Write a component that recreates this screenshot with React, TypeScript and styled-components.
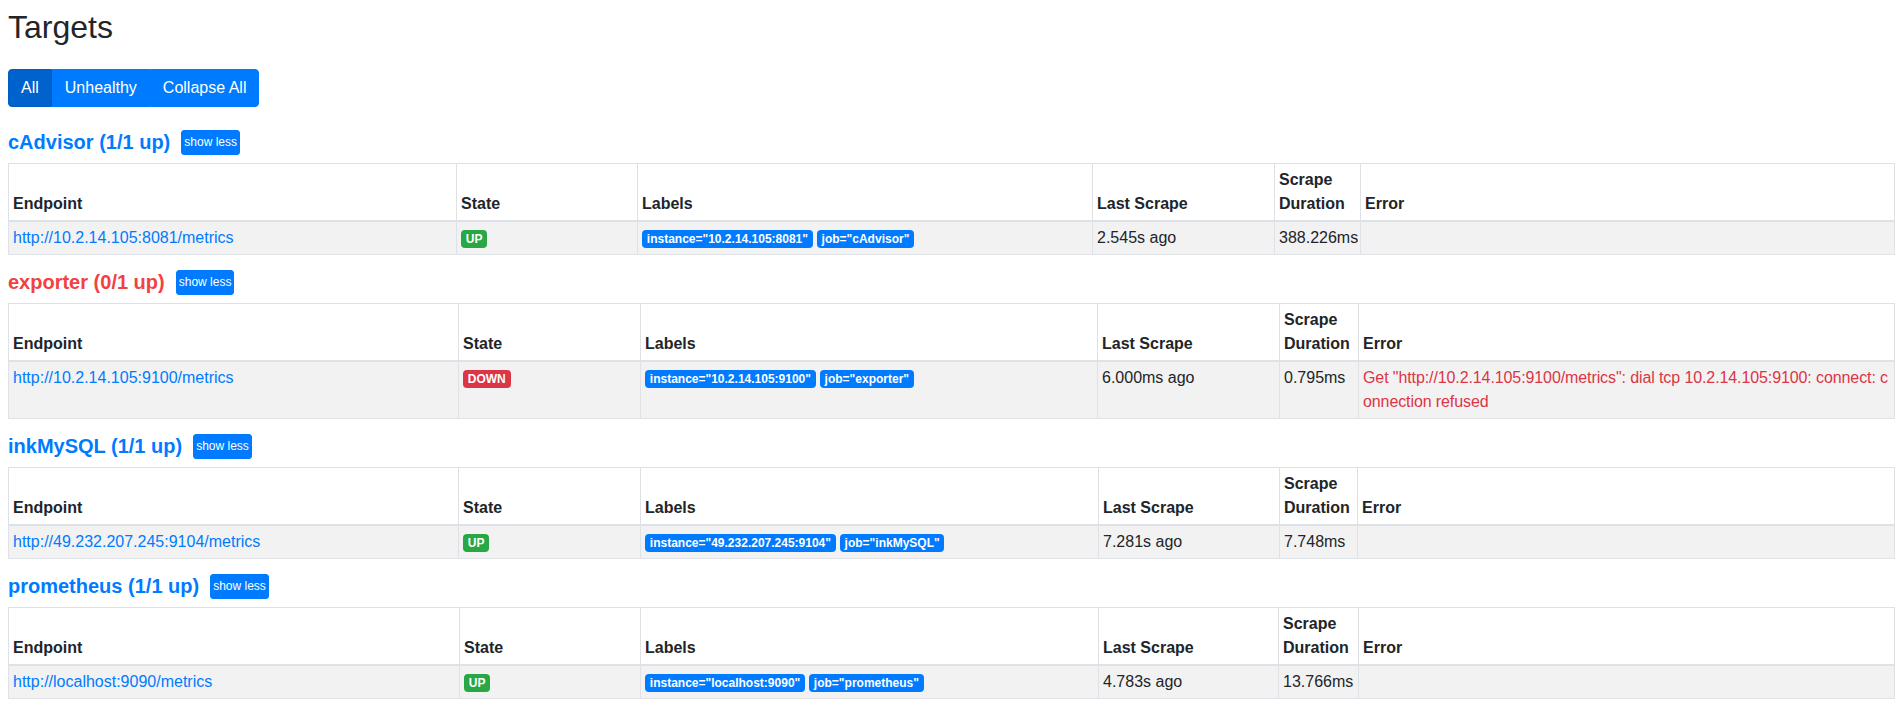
import React from "react";
import styled, { createGlobalStyle } from "styled-components";

const GlobalStyle = createGlobalStyle`
  html, body { margin: 0; padding: 0; background: #fff; }
  body {
    font-family: "Liberation Sans", Arial, sans-serif;
    font-size: 16px;
    line-height: 1.5;
    color: #212529;
  }
  * { box-sizing: border-box; }
`;

const Page = styled.div`
  display: flex;
  flex-direction: column;
  padding: 0 8px;
`;

const Title = styled.h2`
  margin: 8px 0 23px;
  font-size: 32px;
  font-weight: 500;
  line-height: 1.2;
  color: #212529;
`;

const ButtonGroup = styled.div`
  display: inline-flex;
  align-self: flex-start;
  margin-bottom: 8px;
`;

const FilterButton = styled.button<{ $active?: boolean }>`
  font-family: inherit;
  font-size: 16px;
  line-height: 24px;
  padding: 6px 12px;
  color: #fff;
  background: ${(p) => (p.$active ? "#0062cc" : "#007bff")};
  border: 1px solid ${(p) => (p.$active ? "#005cbf" : "#007bff")};
  border-radius: 0;
  cursor: pointer;
  &:first-child { border-radius: 4px 0 0 4px; }
  &:last-child { border-radius: 0 4px 4px 0; }
`;

const PoolHeading = styled.h3`
  display: flex;
  align-items: center;
  height: 25px;
  margin: 15px 0 8px;
  font-size: 20px;
  font-weight: 700;
  line-height: 25px;
`;

const PoolLink = styled.a<{ $danger?: boolean }>`
  color: ${(p) => (p.$danger ? "rgb(242, 65, 65)" : "#007bff")};
  text-decoration: none;
`;

const ShowLess = styled.button`
  margin-left: 11px;
  font-family: inherit;
  font-size: 12px;
  font-weight: 400;
  line-height: 17px;
  padding: 3px 2px;
  color: #fff;
  background: #007bff;
  border: 1px solid #007bff;
  border-radius: 3px;
  cursor: pointer;
`;

const Table = styled.table`
  width: 100%;
  table-layout: fixed;
  border-collapse: collapse;
  border: 1px solid #dee2e6;
  font-size: 16px;
`;

const HeadCell = styled.th`
  padding: 4px;
  line-height: 24px;
  text-align: left;
  vertical-align: bottom;
  font-weight: 700;
  border: 1px solid #dee2e6;
  border-bottom-width: 2px;
`;

const BodyRow = styled.tr`
  background: #f2f2f2;
`;

const Cell = styled.td<{ $error?: boolean }>`
  padding: 4px;
  line-height: 24px;
  vertical-align: top;
  border: 1px solid #dee2e6;
  white-space: ${(p) => (p.$error ? "normal" : "nowrap")};
  word-break: ${(p) => (p.$error ? "break-all" : "normal")};
  color: ${(p) => (p.$error ? "#dc3545" : "#212529")};
  letter-spacing: ${(p) => (p.$error ? "-0.1px" : "normal")};
`;

const EndpointLink = styled.a`
  color: #007bff;
  text-decoration: none;
`;

const Badge = styled.span<{ $tone: "success" | "danger" | "primary" }>`
  display: inline-block;
  margin-right: 4px;
  padding: 3px 4.8px;
  font-size: 12px;
  font-weight: 700;
  line-height: 1;
  color: #fff;
  white-space: nowrap;
  vertical-align: baseline;
  border-radius: 4px;
  background: ${(p) =>
    p.$tone === "success" ? "#28a745" : p.$tone === "danger" ? "#dc3545" : "#007bff"};
`;

type Target = {
  endpoint: string;
  state: "UP" | "DOWN";
  labels: [string, string][];
  last: string;
  duration: string;
  error: string;
};

type Pool = {
  name: string;
  up: number;
  total: number;
  cols: number[];
  targets: Target[];
};

const pools: Pool[] = [
  {
    name: "cAdvisor",
    up: 1,
    total: 1,
    cols: [448, 181, 455, 182, 86],
    targets: [
      {
        endpoint: "http://10.2.14.105:8081/metrics",
        state: "UP",
        labels: [
          ["instance", "10.2.14.105:8081"],
          ["job", "cAdvisor"],
        ],
        last: "2.545s ago",
        duration: "388.226ms",
        error: "",
      },
    ],
  },
  {
    name: "exporter",
    up: 0,
    total: 1,
    cols: [450, 182, 457, 182, 79],
    targets: [
      {
        endpoint: "http://10.2.14.105:9100/metrics",
        state: "DOWN",
        labels: [
          ["instance", "10.2.14.105:9100"],
          ["job", "exporter"],
        ],
        last: "6.000ms ago",
        duration: "0.795ms",
        error:
          'Get "http://10.2.14.105:9100/metrics": dial tcp 10.2.14.105:9100: connect: connection refused',
      },
    ],
  },
  {
    name: "inkMySQL",
    up: 1,
    total: 1,
    cols: [450, 182, 458, 181, 78],
    targets: [
      {
        endpoint: "http://49.232.207.245:9104/metrics",
        state: "UP",
        labels: [
          ["instance", "49.232.207.245:9104"],
          ["job", "inkMySQL"],
        ],
        last: "7.281s ago",
        duration: "7.748ms",
        error: "",
      },
    ],
  },
  {
    name: "prometheus",
    up: 1,
    total: 1,
    cols: [451, 181, 458, 180, 80],
    targets: [
      {
        endpoint: "http://localhost:9090/metrics",
        state: "UP",
        labels: [
          ["instance", "localhost:9090"],
          ["job", "prometheus"],
        ],
        last: "4.783s ago",
        duration: "13.766ms",
        error: "",
      },
    ],
  },
];

const headers = ["Endpoint", "State", "Labels", "Last Scrape", "Scrape Duration", "Error"];

function PoolPanel({ pool }: { pool: Pool }) {
  return (
    <>
      <PoolHeading>
        <PoolLink href={`#pool-${pool.name}`} $danger={pool.up < pool.total}>
          {pool.name} ({pool.up}/{pool.total} up)
        </PoolLink>
        <ShowLess type="button">show less</ShowLess>
      </PoolHeading>
      <Table>
        <colgroup>
          {pool.cols.map((w, i) => (
            <col key={i} style={{ width: w }} />
          ))}
          <col />
        </colgroup>
        <thead>
          <tr>
            {headers.map((h) => (
              <HeadCell key={h}>{h}</HeadCell>
            ))}
          </tr>
        </thead>
        <tbody>
          {pool.targets.map((t) => (
            <BodyRow key={t.endpoint}>
              <Cell>
                <EndpointLink href={t.endpoint}>{t.endpoint}</EndpointLink>
              </Cell>
              <Cell>
                <Badge $tone={t.state === "UP" ? "success" : "danger"}>{t.state}</Badge>
              </Cell>
              <Cell>
                {t.labels.map(([k, v]) => (
                  <Badge key={k} $tone="primary">
                    {k}="{v}"
                  </Badge>
                ))}
              </Cell>
              <Cell>{t.last}</Cell>
              <Cell>{t.duration}</Cell>
              <Cell $error={!!t.error}>{t.error}</Cell>
            </BodyRow>
          ))}
        </tbody>
      </Table>
    </>
  );
}

export default function App() {
  return (
    <>
      <GlobalStyle />
      <Page>
        <Title>Targets</Title>
        <ButtonGroup>
          <FilterButton $active>All</FilterButton>
          <FilterButton>Unhealthy</FilterButton>
          <FilterButton>Collapse All</FilterButton>
        </ButtonGroup>
        {pools.map((p) => (
          <PoolPanel key={p.name} pool={p} />
        ))}
      </Page>
    </>
  );
}
